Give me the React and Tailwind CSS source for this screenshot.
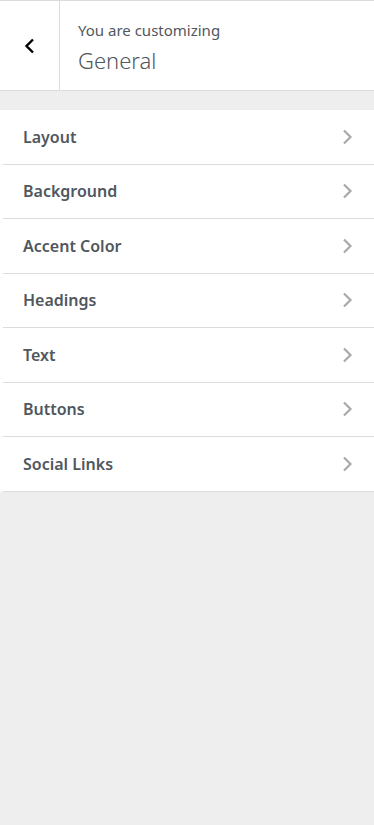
import React from "react";

const sections = [
  "Layout",
  "Background",
  "Accent Color",
  "Headings",
  "Text",
  "Buttons",
  "Social Links",
];

const Chevron = ({ className, color }) => (
  <svg className={className} viewBox="0 0 20 20" fill="none">
    <path d="M7 3.5 L13.5 10 L7 16.5" stroke={color} strokeWidth="2.2" />
  </svg>
);

export default function App() {
  return (
    <div
      className="min-h-[825px] w-[374px] bg-[#eeeeee]"
      style={{ fontFamily: '"Noto Sans", "Open Sans", sans-serif' }}
    >
      {/* header */}
      <div className="flex h-[91px] border-y border-[#dcdcde] bg-white">
        <button className="flex w-[60px] items-center justify-center border-r border-[#dcdcde]">
          <svg className="h-[20px] w-[20px]" viewBox="0 0 20 20" fill="none">
            <path d="M13 3.5 L6.5 10 L13 16.5" stroke="#000" strokeWidth="2.4" />
          </svg>
        </button>
        <div className="flex flex-col pl-[18px] pt-[19px]">
          <span className="text-[15px] leading-[20px] text-[#50575e]">
            You are customizing
          </span>
          <span className="mt-[5px] text-[22px] font-light leading-[30px] text-[#50575e]">
            General
          </span>
        </div>
      </div>

      {/* sections */}
      <ul className="mt-[19px]">
        {sections.map((s) => (
          <li key={s} className="bg-white">
            <div className="flex h-[53.5px] items-center justify-between pl-[23px] pr-[17px]">
              <span className="text-[16px] font-semibold text-[#50575e]">
                {s}
              </span>
              <Chevron className="h-[20px] w-[20px]" color="#a7aaad" />
            </div>
            <div className="ml-[3px] h-px bg-[#dcdcde]" />
          </li>
        ))}
      </ul>
    </div>
  );
}
